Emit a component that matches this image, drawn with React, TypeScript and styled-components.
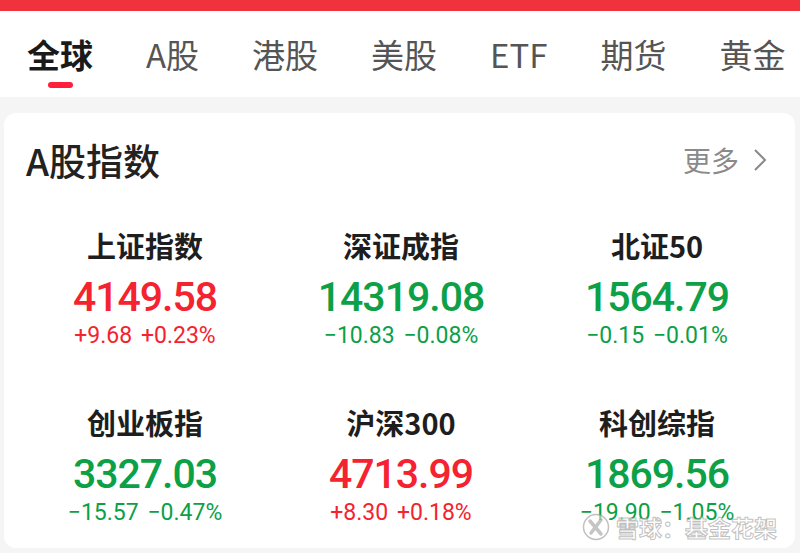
import React, { FC } from "react";
import styled, { createGlobalStyle } from "styled-components";

const GlobalStyle = createGlobalStyle`
	html, body {
		margin: 0;
		padding: 0;
		background: #f5f5f5;
		font-family: Roboto, "Noto Sans CJK SC", sans-serif;
	}
	#root {
		width: 800px;
		height: 553px;
		overflow: hidden;
	}
`;

const RED = "#f5222f";
const GREEN = "#0ca047";

const Page = styled.div`
	position: relative;
	width: 800px;
	height: 553px;
	background: #f5f5f5;
	display: flex;
	flex-direction: column;
`;

const TopBar = styled.div`
	height: 11px;
	background: #ef323b;
`;

const TabBar = styled.div`
	height: 86px;
	background: #fff;
	display: flex;
	align-items: flex-start;
	gap: 53px;
	padding: 24px 0 0 27px;
	box-sizing: border-box;
	white-space: nowrap;
	overflow: hidden;
`;

const Tab = styled.div<{ $active?: boolean }>`
	position: relative;
	font-family: "Noto Sans CJK SC", sans-serif;
	font-size: 33px;
	line-height: 38px;
	font-weight: ${(p) => (p.$active ? 700 : 400)};
	color: ${(p) => (p.$active ? "#1a1a1a" : "#555")};
`;

const Indicator = styled.span`
	position: absolute;
	left: 50%;
	top: 47px;
	width: 25px;
	height: 6px;
	margin-left: -12px;
	border-radius: 3px;
	background: #ff1f3d;
`;

const Card = styled.div`
	margin: 16px 5px 0 4px;
	height: 435px;
	background: #fff;
	border-radius: 12px;
	display: flex;
	flex-direction: column;
`;

const CardHeader = styled.div`
	display: flex;
	align-items: center;
	justify-content: space-between;
	padding: 27px 28px 0 22px;
	height: 40px;
`;

const CardTitle = styled.div`
	font-family: "Noto Sans CJK SC", sans-serif;
	font-size: 37px;
	font-weight: 500;
	color: #222;
`;

const MoreLink = styled.div`
	display: flex;
	align-items: center;
	gap: 14px;
	font-family: "Noto Sans CJK SC", sans-serif;
	font-size: 28px;
	color: #8a8a8a;
`;

const IndexGrid = styled.div`
	display: grid;
	grid-template-columns: repeat(3, 256px);
	grid-auto-rows: 177px;
	padding: 45px 0 0 13px;
`;

const IndexCell = styled.div`
	display: flex;
	flex-direction: column;
	align-items: center;
`;

const IndexName = styled.div`
	font-family: "Noto Sans CJK SC", sans-serif;
	font-size: 29px;
	line-height: 40px;
	font-weight: 700;
	color: #1e1e1e;
`;

const IndexValue = styled.div<{ $up: boolean }>`
	font-family: Roboto, sans-serif;
	font-size: 41px;
	line-height: 50px;
	font-weight: 500;
	letter-spacing: -1px;
	margin-top: 7px;
	color: ${(p) => (p.$up ? RED : GREEN)};
`;

const IndexChange = styled.div<{ $up: boolean }>`
	font-family: Roboto, sans-serif;
	font-size: 23px;
	line-height: 28px;
	margin-top: 0;
	color: ${(p) => (p.$up ? RED : GREEN)};
	word-spacing: 3px;
`;

const Watermark = styled.div`
	position: absolute;
	left: 582px;
	top: 512px;
	display: flex;
	align-items: center;
	gap: 6px;
	white-space: nowrap;
	font-family: "Noto Sans CJK SC", sans-serif;
	font-size: 23px;
	line-height: 30px;
	font-weight: 700;
	color: rgba(255, 255, 255, 0.6);
	-webkit-text-stroke: 1px rgba(150, 150, 150, 0.6);
`;

interface IIndex {
	name: string;
	value: string;
	change: string;
	pct: string;
	up: boolean;
}

const INDICES: IIndex[] = [
	{ name: "上证指数", value: "4149.58", change: "+9.68", pct: "+0.23%", up: true },
	{ name: "深证成指", value: "14319.08", change: "\u221210.83", pct: "\u22120.08%", up: false },
	{ name: "北证50", value: "1564.79", change: "\u22120.15", pct: "\u22120.01%", up: false },
	{ name: "创业板指", value: "3327.03", change: "\u221215.57", pct: "\u22120.47%", up: false },
	{ name: "沪深300", value: "4713.99", change: "+8.30", pct: "+0.18%", up: true },
	{ name: "科创综指", value: "1869.56", change: "\u221219.90", pct: "\u22121.05%", up: false },
];

const TABS = ["全球", "A股", "港股", "美股", "ETF", "期货", "黄金"];

const Chevron: FC = () => (
	<svg width="14" height="24" viewBox="0 0 14 24" fill="none">
		<path d="M2 2 L12 12 L2 22" stroke="#8a8a8a" strokeWidth="2" />
	</svg>
);

const SnowLogo: FC = () => (
	<svg width="28" height="28" viewBox="0 0 28 28" fill="none">
		<circle cx="14" cy="14" r="12.5" stroke="rgba(150,150,150,0.6)" strokeWidth="1.5" fill="rgba(255,255,255,0.5)" />
		<path d="M8 8 L19 21 M19 7 L9 20" stroke="rgba(150,150,150,0.55)" strokeWidth="3.5" strokeLinecap="round" />
	</svg>
);

export default function App() {
	return (
		<Page>
			<GlobalStyle />
			<TopBar />
			<TabBar>
				{TABS.map((t, i) => (
					<Tab key={t} $active={i === 0}>
						{t}
						{i === 0 && <Indicator />}
					</Tab>
				))}
			</TabBar>
			<Card>
				<CardHeader>
					<CardTitle>A股指数</CardTitle>
					<MoreLink>
						更多
						<Chevron />
					</MoreLink>
				</CardHeader>
				<IndexGrid>
					{INDICES.map((idx) => (
						<IndexCell key={idx.name}>
							<IndexName>{idx.name}</IndexName>
							<IndexValue $up={idx.up}>{idx.value}</IndexValue>
							<IndexChange $up={idx.up}>
								{idx.change} {idx.pct}
							</IndexChange>
						</IndexCell>
					))}
				</IndexGrid>
			</Card>
			<Watermark>
				<SnowLogo />
				雪球：基金花架
			</Watermark>
		</Page>
	);
}
